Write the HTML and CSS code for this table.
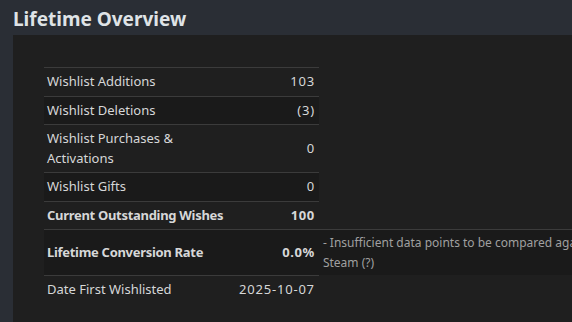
FILE: index.html
```html
<!DOCTYPE html>
<html lang="en">
<head>
<meta charset="utf-8">
<title>Lifetime Overview</title>
<link rel="stylesheet" href="styles.css">
</head>
<body>
<h2 class="section-title">Lifetime Overview</h2>
<div class="panel">
  <table class="stats">
    <tr><td class="label">Wishlist Additions</td><td class="value">103</td></tr>
    <tr class="alt"><td class="label">Wishlist Deletions</td><td class="value">(3)</td></tr>
    <tr><td class="label">Wishlist Purchases &amp; Activations</td><td class="value">0</td></tr>
    <tr class="alt"><td class="label">Wishlist Gifts</td><td class="value">0</td></tr>
    <tr class="strong"><td class="label">Current Outstanding Wishes</td><td class="value">100</td></tr>
    <tr class="alt strong"><td class="label">Lifetime Conversion Rate</td><td class="value">0.0%</td><td class="note">- Insufficient data points to be compared against similar products on Steam (?)</td></tr>
    <tr><td class="label">Date First Wishlisted</td><td class="value">2025-10-07</td></tr>
  </table>
</div>
</body>
</html>
```
FILE: styles.css
```css
html, body {
  margin: 0;
  padding: 0;
  overflow: hidden;
}
body {
  width: 572px;
  height: 322px;
  background: #2a2e35;
  font-family: "Noto Sans", "Open Sans", Arial, sans-serif;
  color: #d6d7d8;
}
.section-title {
  margin: 0;
  padding: 6px 0 0 13px;
  height: 35px;
  box-sizing: border-box;
  font-size: 19px;
  line-height: 26px;
  font-weight: bold;
  color: #dfe3e6;
}
.panel {
  margin-left: 13px;
  background: #1f1f1f;
  padding: 32px 0 40px 31px;
  width: 800px;
}
.stats {
  border-collapse: collapse;
  font-size: 13px;
  line-height: 19.5px;
}
.stats td {
  border-top: 1px solid #3b3b3b;
  padding: 4px 5px 4px 3px;
  vertical-align: middle;
}
.stats .label {
  width: 184px;
}
.stats .value {
  width: 75px;
  padding-right: 4px;
  text-align: right;
  white-space: nowrap;
  letter-spacing: 0.8px;
}
.stats .alt td {
  background: #1a1a1a;
}
.stats .strong .label {
  font-weight: bold;
  letter-spacing: -0.3px;
  white-space: nowrap;
}
.stats .strong .value {
  font-weight: bold;
  letter-spacing: 0.6px;
}
.stats .note {
  width: 420px;
  padding: 3px 4px;
  font-size: 12px;
  color: #a0a0a0;
  font-weight: normal;
}
```
